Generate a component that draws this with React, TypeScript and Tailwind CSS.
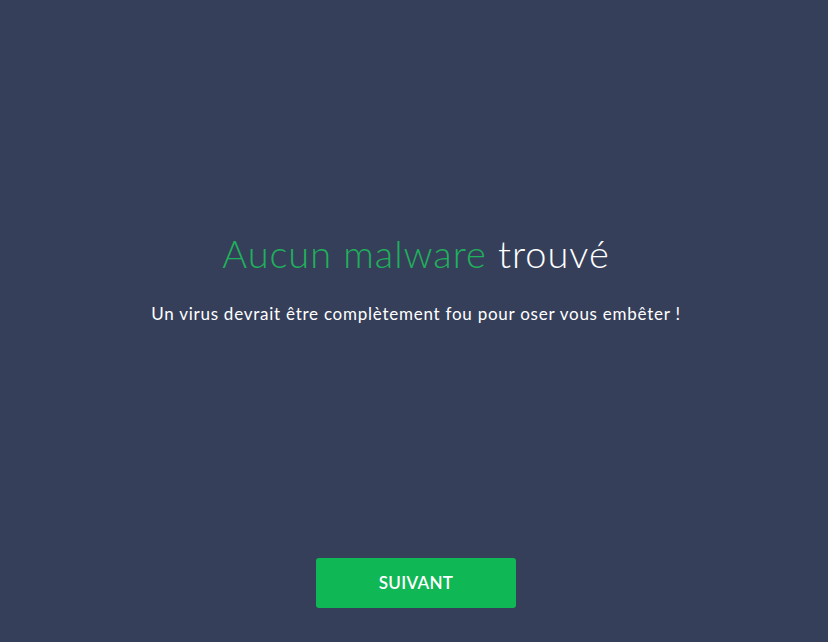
export default function App() {
  return (
    <div className="w-[828px] h-[642px] bg-[#363f5a] flex flex-col items-center pl-[4px]" style={{ fontFamily: "Lato, 'Noto Sans', sans-serif" }}>
      <h1 className="mt-[228px] text-[38px] font-light leading-[50px] tracking-[0.95px]">
        <span className="text-[#1fb05c]">Aucun malware</span>{" "}
        <span className="text-white">trouvé</span>
      </h1>
      <p className="mt-[24px] text-[17px] leading-[24px] text-white tracking-[0.75px]">
        Un virus devrait être complètement fou pour oser vous embêter !
      </p>
      <button className="mt-[232px] w-[200px] h-[50px] rounded-[3px] bg-[#0fb755] text-white text-[17px] font-semibold tracking-[0.3px]">
        SUIVANT
      </button>
    </div>
  );
}
